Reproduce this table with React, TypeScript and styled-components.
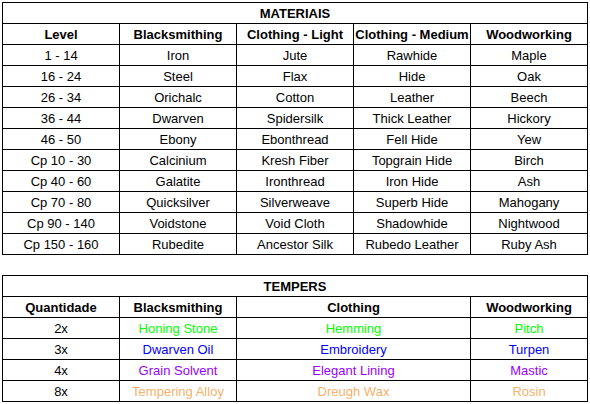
import React from 'react';
import styled, { createGlobalStyle } from 'styled-components';

const GlobalStyle = createGlobalStyle`
  html, body {
    margin: 0;
    padding: 0;
    background: #ffffff;
  }
  body {
    font-family: 'Liberation Sans', Arial, sans-serif;
    font-size: 13px;
    color: #000000;
  }
`;

const Page = styled.div`
  padding: 2px 0 0 2px;
  display: flex;
  flex-direction: column;
  gap: 20px;
`;

const Sheet = styled.div<{ $cols: string }>`
  display: grid;
  grid-template-columns: ${({ $cols }) => $cols};
  grid-auto-rows: 21px;
  width: 586px;
  box-sizing: border-box;
  border-top: 1px solid #000;
  border-left: 1px solid #000;
`;

const Cell = styled.div<{ $span?: number; $bold?: boolean; $color?: string }>`
  grid-column: span ${({ $span }) => $span ?? 1};
  box-sizing: border-box;
  border-right: 1px solid #000;
  border-bottom: 1px solid #000;
  display: flex;
  align-items: center;
  justify-content: center;
  padding-top: 1px;
  white-space: nowrap;
  overflow: hidden;
  font-weight: ${({ $bold }) => ($bold ? 700 : 400)};
  color: ${({ $color }) => $color ?? '#000'};
`;

const materialHeaders = [
  'Level',
  'Blacksmithing',
  'Clothing - Light',
  'Clothing - Medium',
  'Woodworking',
];

const materials: string[][] = [
  ['1 - 14', 'Iron', 'Jute', 'Rawhide', 'Maple'],
  ['16 - 24', 'Steel', 'Flax', 'Hide', 'Oak'],
  ['26 - 34', 'Orichalc', 'Cotton', 'Leather', 'Beech'],
  ['36 - 44', 'Dwarven', 'Spidersilk', 'Thick Leather', 'Hickory'],
  ['46 - 50', 'Ebony', 'Ebonthread', 'Fell Hide', 'Yew'],
  ['Cp 10 - 30', 'Calcinium', 'Kresh Fiber', 'Topgrain Hide', 'Birch'],
  ['Cp 40 - 60', 'Galatite', 'Ironthread', 'Iron Hide', 'Ash'],
  ['Cp 70 - 80', 'Quicksilver', 'Silverweave', 'Superb Hide', 'Mahogany'],
  ['Cp 90 - 140', 'Voidstone', 'Void Cloth', 'Shadowhide', 'Nightwood'],
  ['Cp 150 - 160', 'Rubedite', 'Ancestor Silk', 'Rubedo Leather', 'Ruby Ash'],
];

const tempers = [
  { qty: '2x', color: '#00ff00', items: ['Honing Stone', 'Hemming', 'Pitch'] },
  { qty: '3x', color: '#0000ff', items: ['Dwarven Oil', 'Embroidery', 'Turpen'] },
  { qty: '4x', color: '#9900ff', items: ['Grain Solvent', 'Elegant Lining', 'Mastic'] },
  { qty: '8x', color: '#f6b26b', items: ['Tempering Alloy', 'Dreugh Wax', 'Rosin'] },
];

export default function App() {
  return (
    <>
      <GlobalStyle />
      <Page>
        <Sheet $cols='repeat(5, 117px)'>
          <Cell $span={5} $bold>
            MATERIAIS
          </Cell>
          {materialHeaders.map((h) => (
            <Cell key={h} $bold>
              {h}
            </Cell>
          ))}
          {materials.map((row) =>
            row.map((value, i) => <Cell key={row[0] + i}>{value}</Cell>)
          )}
        </Sheet>

        <Sheet $cols='117px 117px 234px 117px'>
          <Cell $span={4} $bold>
            TEMPERS
          </Cell>
          <Cell $bold>Quantidade</Cell>
          <Cell $bold>Blacksmithing</Cell>
          <Cell $bold>Clothing</Cell>
          <Cell $bold>Woodworking</Cell>
          {tempers.map((t) => (
            <React.Fragment key={t.qty}>
              <Cell>{t.qty}</Cell>
              {t.items.map((item) => (
                <Cell key={item} $color={t.color}>
                  {item}
                </Cell>
              ))}
            </React.Fragment>
          ))}
        </Sheet>
      </Page>
    </>
  );
}
